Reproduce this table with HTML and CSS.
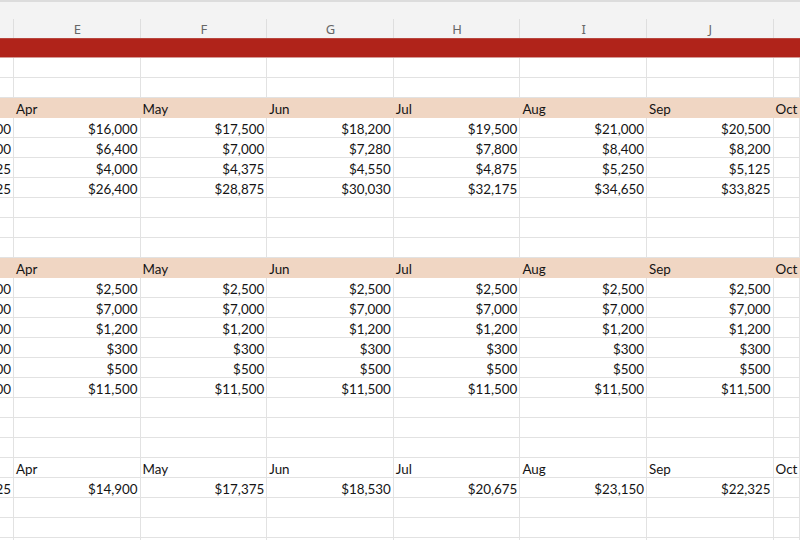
FILE: index.html
```html
<!DOCTYPE html>
<html>
<head>
<meta charset="utf-8">
<link rel="stylesheet" href="styles.css">
</head>
<body>
<div class="sheet">
  <div class="colhead">
    <div class="h"></div><div class="h">E</div><div class="h">F</div><div class="h">G</div><div class="h">H</div><div class="h">I</div><div class="h">J</div><div class="h"></div>
  </div>
  <div class="row banner"></div>
  <div class="row"><div class="c"></div><div class="c"></div><div class="c"></div><div class="c"></div><div class="c"></div><div class="c"></div><div class="c"></div><div class="c"></div></div>
  <div class="row"><div class="c"></div><div class="c"></div><div class="c"></div><div class="c"></div><div class="c"></div><div class="c"></div><div class="c"></div><div class="c"></div></div>
  <div class="row tan"><div class="c"></div><div class="c">Apr</div><div class="c">May</div><div class="c">Jun</div><div class="c">Jul</div><div class="c">Aug</div><div class="c">Sep</div><div class="c">Oct</div></div>
  <div class="row num"><div class="c">$15,000</div><div class="c">$16,000</div><div class="c">$17,500</div><div class="c">$18,200</div><div class="c">$19,500</div><div class="c">$21,000</div><div class="c">$20,500</div><div class="c"></div></div>
  <div class="row num"><div class="c">$6,000</div><div class="c">$6,400</div><div class="c">$7,000</div><div class="c">$7,280</div><div class="c">$7,800</div><div class="c">$8,400</div><div class="c">$8,200</div><div class="c"></div></div>
  <div class="row num"><div class="c">$3,625</div><div class="c">$4,000</div><div class="c">$4,375</div><div class="c">$4,550</div><div class="c">$4,875</div><div class="c">$5,250</div><div class="c">$5,125</div><div class="c"></div></div>
  <div class="row num"><div class="c">$24,625</div><div class="c">$26,400</div><div class="c">$28,875</div><div class="c">$30,030</div><div class="c">$32,175</div><div class="c">$34,650</div><div class="c">$33,825</div><div class="c"></div></div>
  <div class="row"><div class="c"></div><div class="c"></div><div class="c"></div><div class="c"></div><div class="c"></div><div class="c"></div><div class="c"></div><div class="c"></div></div>
  <div class="row"><div class="c"></div><div class="c"></div><div class="c"></div><div class="c"></div><div class="c"></div><div class="c"></div><div class="c"></div><div class="c"></div></div>
  <div class="row"><div class="c"></div><div class="c"></div><div class="c"></div><div class="c"></div><div class="c"></div><div class="c"></div><div class="c"></div><div class="c"></div></div>
  <div class="row tan"><div class="c"></div><div class="c">Apr</div><div class="c">May</div><div class="c">Jun</div><div class="c">Jul</div><div class="c">Aug</div><div class="c">Sep</div><div class="c">Oct</div></div>
  <div class="row num"><div class="c">$2,500</div><div class="c">$2,500</div><div class="c">$2,500</div><div class="c">$2,500</div><div class="c">$2,500</div><div class="c">$2,500</div><div class="c">$2,500</div><div class="c"></div></div>
  <div class="row num"><div class="c">$7,000</div><div class="c">$7,000</div><div class="c">$7,000</div><div class="c">$7,000</div><div class="c">$7,000</div><div class="c">$7,000</div><div class="c">$7,000</div><div class="c"></div></div>
  <div class="row num"><div class="c">$1,200</div><div class="c">$1,200</div><div class="c">$1,200</div><div class="c">$1,200</div><div class="c">$1,200</div><div class="c">$1,200</div><div class="c">$1,200</div><div class="c"></div></div>
  <div class="row num"><div class="c">$300</div><div class="c">$300</div><div class="c">$300</div><div class="c">$300</div><div class="c">$300</div><div class="c">$300</div><div class="c">$300</div><div class="c"></div></div>
  <div class="row num"><div class="c">$500</div><div class="c">$500</div><div class="c">$500</div><div class="c">$500</div><div class="c">$500</div><div class="c">$500</div><div class="c">$500</div><div class="c"></div></div>
  <div class="row num"><div class="c">$11,500</div><div class="c">$11,500</div><div class="c">$11,500</div><div class="c">$11,500</div><div class="c">$11,500</div><div class="c">$11,500</div><div class="c">$11,500</div><div class="c"></div></div>
  <div class="row"><div class="c"></div><div class="c"></div><div class="c"></div><div class="c"></div><div class="c"></div><div class="c"></div><div class="c"></div><div class="c"></div></div>
  <div class="row"><div class="c"></div><div class="c"></div><div class="c"></div><div class="c"></div><div class="c"></div><div class="c"></div><div class="c"></div><div class="c"></div></div>
  <div class="row"><div class="c"></div><div class="c"></div><div class="c"></div><div class="c"></div><div class="c"></div><div class="c"></div><div class="c"></div><div class="c"></div></div>
  <div class="row"><div class="c"></div><div class="c">Apr</div><div class="c">May</div><div class="c">Jun</div><div class="c">Jul</div><div class="c">Aug</div><div class="c">Sep</div><div class="c">Oct</div></div>
  <div class="row num"><div class="c">$13,125</div><div class="c">$14,900</div><div class="c">$17,375</div><div class="c">$18,530</div><div class="c">$20,675</div><div class="c">$23,150</div><div class="c">$22,325</div><div class="c"></div></div>
  <div class="row"><div class="c"></div><div class="c"></div><div class="c"></div><div class="c"></div><div class="c"></div><div class="c"></div><div class="c"></div><div class="c"></div></div>
  <div class="row"><div class="c"></div><div class="c"></div><div class="c"></div><div class="c"></div><div class="c"></div><div class="c"></div><div class="c"></div><div class="c"></div></div>
  <div class="row"><div class="c"></div><div class="c"></div><div class="c"></div><div class="c"></div><div class="c"></div><div class="c"></div><div class="c"></div><div class="c"></div></div>
</div>
</body>
</html>
```

FILE: styles.css
```css
* { box-sizing: border-box; }
html, body { margin: 0; padding: 0; background: #fff; overflow: hidden; }
body { width: 800px; height: 540px; }

.sheet {
  width: 800px;
  font-family: Lato, "Liberation Sans", sans-serif;
  font-size: 13.4px;
  color: #141414;
}

.colhead, .row {
  display: grid;
  grid-template-columns: 14px repeat(6, 126.6px) 1fr;
}

.colhead {
  height: 38px;
  background: #f3f3f3;
  border-top: 2px solid #dcdcdc;
}
.colhead .h {
  position: relative;
  display: flex;
  align-items: center;
  justify-content: center;
  padding-top: 17px;
  font-family: "Noto Sans", sans-serif;
  font-size: 13px;
  color: #666;
}
.colhead .h::after {
  content: "";
  position: absolute;
  right: 0;
  top: 17px;
  bottom: 0;
  width: 1px;
  background: #dedede;
}
.colhead .h:last-child::after { display: none; }

.row { height: 20px; }

.banner {
  display: block;
  background: #b0231a;
  border-top: 1px solid #b8463e;
  border-bottom: 1px solid #d69b96;
}

.c {
  height: 20px;
  border-right: 1px solid #e2e2e2;
  border-bottom: 1px solid #e2e2e2;
  padding: 2px 2px 0;
  white-space: nowrap;
  overflow: hidden;
  display: flex;
  align-items: center;
}

.num .c { justify-content: flex-end; }

.tan { background: #f0d6c3; }
.tan .c { border-right-color: transparent; border-bottom-color: #f0d6c3; }
```
